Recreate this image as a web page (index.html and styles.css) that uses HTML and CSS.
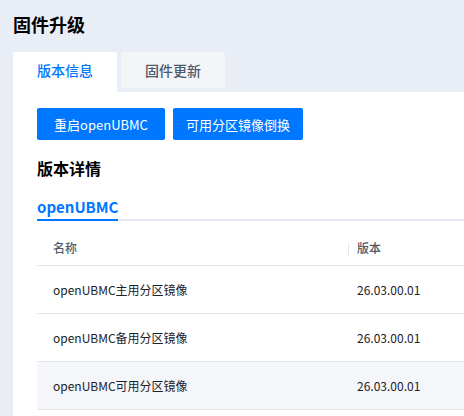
FILE: index.html
```html
<!DOCTYPE html>
<html lang="zh-CN">
<head>
    <meta charset="UTF-8">
    <title>固件升级</title>
    <link rel="stylesheet" href="styles.css">
</head>
<body>
    <div class="page">
        <h1 class="page-title">固件升级</h1>

        <div class="tabs">
            <div class="tab active">版本信息</div>
            <div class="tab">固件更新</div>
        </div>

        <div class="panel">
            <div class="actions">
                <button class="btn btn-restart">重启openUBMC</button>
                <button class="btn btn-switch">可用分区镜像倒换</button>
            </div>

            <h2 class="section-title">版本详情</h2>

            <div class="sub-tabs">
                <div class="sub-tab active">openUBMC</div>
            </div>

            <table class="version-table">
                <thead>
                    <tr>
                        <th class="col-name">名称</th>
                        <th class="col-version"><span class="th-sep"></span>版本</th>
                    </tr>
                </thead>
                <tbody>
                    <tr>
                        <td>openUBMC主用分区镜像</td>
                        <td>26.03.00.01</td>
                    </tr>
                    <tr>
                        <td>openUBMC备用分区镜像</td>
                        <td>26.03.00.01</td>
                    </tr>
                    <tr class="hover">
                        <td>openUBMC可用分区镜像</td>
                        <td>26.03.00.01</td>
                    </tr>
                </tbody>
            </table>
        </div>
    </div>
</body>
</html>
```

FILE: styles.css
```css
* {
    margin: 0;
    padding: 0;
    box-sizing: border-box;
    font-family: "Noto Sans CJK SC", "Noto Sans", sans-serif;
}

body {
    background: #e9eef6;
    color: #000;
    overflow: hidden;
}

.page {
    padding: 12px 0 0 13px;
}

.page-title {
    font-size: 18px;
    font-weight: 700;
    line-height: 24px;
    margin-bottom: 16px;
}

/* top level tabs */
.tabs {
    display: flex;
    align-items: flex-start;
    gap: 4px;
}

.tab {
    width: 104px;
    height: 36px;
    line-height: 36px;
    text-align: center;
    font-size: 14px;
    font-weight: 500;
    color: #4e5969;
    background: #f3f5f9;
    border-radius: 2px 2px 0 0;
}

.tab.active {
    height: 40px;
    color: #0077ff;
    background: #fff;
}

.panel {
    background: #fff;
    padding: 16px 0 7px 24px;
}

.actions {
    display: flex;
    gap: 8px;
}

.btn {
    height: 32px;
    border: none;
    border-radius: 2px;
    background: #0077ff;
    color: #fff;
    font-size: 13px;
}

.btn-restart {
    width: 128px;
}

.btn-switch {
    width: 130px;
}

.section-title {
    font-size: 16px;
    font-weight: 700;
    line-height: 24px;
    margin-top: 16px;
}

/* openUBMC tab strip */
.sub-tabs {
    display: flex;
    margin-top: 16px;
    border-bottom: 2px solid #e6e9ef;
}

.sub-tab {
    font-size: 15px;
    font-weight: 700;
    line-height: 22px;
    padding-bottom: 1px;
    color: #0077ff;
    border-bottom: 2px solid #0077ff;
    margin-bottom: -2px;
}

.version-table {
    margin-top: 10px;
    width: 100%;
    border-collapse: collapse;
    font-size: 12px;
}

.version-table th {
    height: 34px;
    text-align: left;
    font-weight: 500;
    color: #4e5969;
    border-bottom: 1px solid #e1e5ec;
}

.version-table td {
    height: 48px;
    color: #1d2129;
    border-bottom: 1px solid #e1e5ec;
}

.version-table th:first-child,
.version-table td:first-child {
    width: 311px;
    padding-left: 16px;
}

.version-table th:last-child,
.version-table td:last-child {
    padding-left: 9px;
}

.col-version {
    position: relative;
}

.th-sep {
    position: absolute;
    left: 0;
    top: 12px;
    width: 1px;
    height: 13px;
    background: #e1e5ec;
}

.version-table tr.hover td {
    background: #f5f6fa;
}
```
